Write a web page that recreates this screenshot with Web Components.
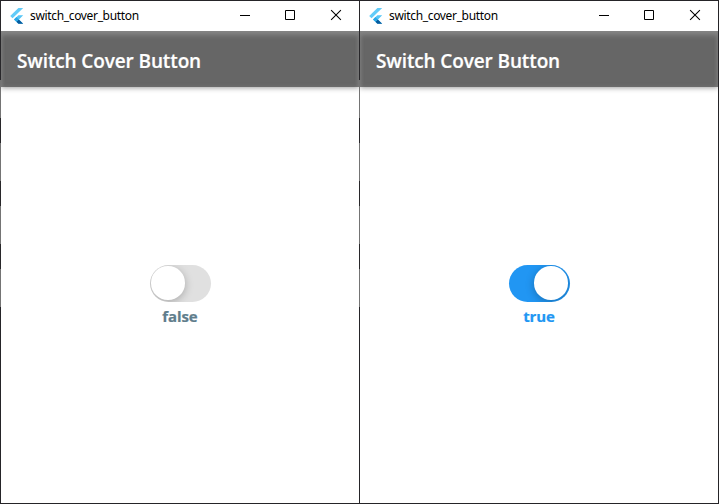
<!DOCTYPE html>
<html lang="en">
<head>
<meta charset="utf-8">
<title>switch_cover_button</title>
<style>
html,body{margin:0;height:100%;background:#fff;overflow:hidden}
</style>
</head>
<body>
<window-pair>
  <app-window caption="switch_cover_button">
    <app-bar>Switch Cover Button</app-bar>
    <cover-switch></cover-switch>
  </app-window>
  <app-window caption="switch_cover_button">
    <app-bar>Switch Cover Button</app-bar>
    <cover-switch checked></cover-switch>
  </app-window>
</window-pair>
<script>
const define = (name, html, setup) => customElements.define(name, class extends HTMLElement {
  connectedCallback() {
    if (this.shadowRoot) return;
    this.attachShadow({mode: 'open'}).innerHTML = html;
    if (setup) setup(this, this.shadowRoot);
  }
});

define('window-pair', `
<style>
:host{display:grid;grid-template-columns:359px 359px 1px;width:719px;height:504px;box-sizing:border-box;
 border-top:1px solid #252428;border-bottom:1px solid #252428;font-family:"Open Sans","Noto Sans",sans-serif}
.edge{background:#252428}
</style>
<slot></slot><div class="edge"></div>`);

define('app-window', `
<style>
:host{display:grid;grid-template-columns:1px 358px;min-width:0}
/* window border, lighter where the desktop behind shows through */
.edge{background:linear-gradient(#28272a 79px,#747474 79px 117px,#28272a 117px 142px,#747474 142px 180px,#28272a 180px 205px,#747474 205px 243px,#28272a 243px 268px,#747474 268px 306px,#252428 306px)}
.body{display:flex;flex-direction:column;background:#fff;min-width:0}
</style>
<div class="edge"></div>
<div class="body"><title-bar></title-bar><slot></slot></div>`,
(el, root) => root.querySelector('title-bar').setAttribute('caption', el.getAttribute('caption')));

define('title-bar', `
<style>
:host{display:flex;height:30px;flex:none;align-items:center;padding-left:9px;box-sizing:border-box;background:#fff}
.logo{width:14px;height:16px;flex:none;margin-top:-1px}
.text{flex:1;padding-left:6px;font:12px/16px "Noto Sans","Open Sans",sans-serif;letter-spacing:-.34px;color:#000;white-space:nowrap}
.ctl{width:46px;height:30px;flex:none}
</style>
<svg class="logo" viewBox="0 0 14 16">
 <path d="M8.4 0H13.2L2.6 10.3L.2 7.9Z" fill="#61cbf8"/>
 <path d="M8.4 7.2H13.2L9 11.4L13.2 15.8H8.4L4 11.4Z" fill="#55c5f6"/>
 <path d="M6.4 13.8L8.8 11.4L13.2 15.8H8.4Z" fill="#075b9d"/>
 <path d="M4 11.4L6.4 9L8.8 11.4L6.4 13.8Z" fill="#2aa7e6"/>
</svg>
<span class="text"></span>
<svg class="ctl" viewBox="0 0 46 30"><path d="M19 14.5H29" stroke="#000" fill="none"/></svg>
<svg class="ctl" viewBox="0 0 46 30"><path d="M18.5 9.5H27.5V18.5H18.5Z" stroke="#000" fill="none"/></svg>
<svg class="ctl" viewBox="0 0 46 30"><path d="M18.1 9.1L27.9 18.9M27.9 9.1L18.1 18.9" stroke="#000" stroke-width="1.05" fill="none"/></svg>`,
(el, root) => root.querySelector('.text').textContent = el.getAttribute('caption'));

define('app-bar', `
<style>
:host{display:flex;align-items:center;flex:none;height:56px;box-sizing:border-box;padding:4px 16px 0;background:#666;color:#fff;
 font-size:19px;line-height:28px;font-weight:600;letter-spacing:-.12px;white-space:nowrap;-webkit-text-stroke:.2px #fff;
 box-shadow:inset 0 4px 5px #858585,inset 0 0 4px #747474,0 1px 5px rgba(0,0,0,.38);clip-path:inset(0 0 -12px 0)}
</style>
<span><slot></slot></span>`);

define('cover-switch', `
<style>
:host{flex:1;display:flex;flex-direction:column;align-items:center;justify-content:center;padding-top:1px;box-sizing:border-box;color:#607d8b}
:host([checked]){color:#2196f3}
.track{display:flex;align-items:center;box-sizing:border-box;width:61px;height:37px;padding:0 1.5px;border-radius:19px;background:#e0e0e0;overflow:hidden}
:host([checked]) .track{background:#2196f3;justify-content:flex-end}
.thumb{width:33.6px;height:33.6px;border-radius:50%;background:#fff;box-shadow:0 2px 8px rgba(0,0,0,.25)}
.label{font-size:15px;line-height:22px;font-weight:700;letter-spacing:-.1px;padding-top:3px;-webkit-text-stroke:.2px currentColor}
</style>
<div class="track"><div class="thumb"></div></div>
<div class="label"></div>`,
(el, root) => root.querySelector('.label').textContent = String(el.hasAttribute('checked')));
</script>
</body>
</html>
